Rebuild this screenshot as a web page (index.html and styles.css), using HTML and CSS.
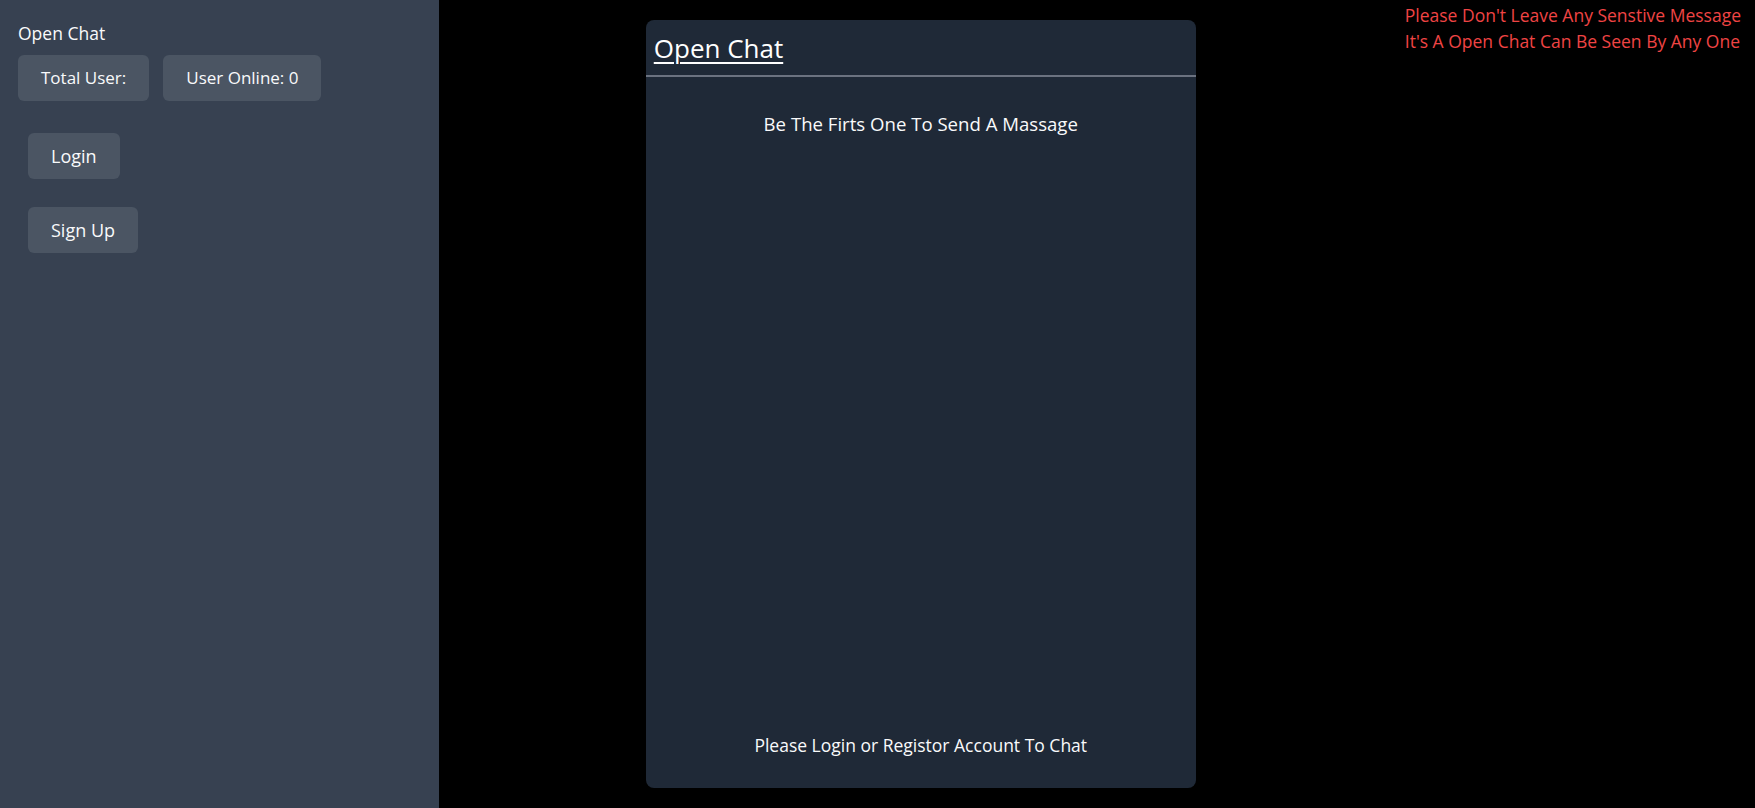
FILE: index.html
```html
<!DOCTYPE html>
<html lang="en">
<head>
<meta charset="utf-8">
<title>Open Chat</title>
<link rel="stylesheet" href="styles.css">
</head>
<body>
<div class="app">
  <aside class="sidebar">
    <div class="brand">Open Chat</div>
    <div class="stats">
      <div class="chip">Total User:</div>
      <div class="chip">User Online: 0</div>
    </div>
    <div class="auth">
      <button class="btn">Login</button>
      <button class="btn">Sign Up</button>
    </div>
  </aside>
  <main class="main">
    <section class="card">
      <header class="card-head"><a class="card-title" href="#">Open Chat</a></header>
      <div class="messages">
        <p class="empty">Be The Firts One To Send A Massage</p>
      </div>
      <footer class="card-foot">Please Login or Registor Account To Chat</footer>
    </section>
    <div class="notes">
      <p>Please Don't Leave Any Senstive Message</p>
      <p>It's A Open Chat Can Be Seen By Any One</p>
    </div>
  </main>
</div>
</body>
</html>
```

FILE: styles.css
```css
* { box-sizing: border-box; }
html, body { margin: 0; height: 100%; }
body {
  background: #000;
  color: #f9fafb;
  font-family: "Open Sans", "Noto Sans", sans-serif;
  font-size: 17px;
}
.app {
  display: flex;
  height: 808px;
}
.sidebar {
  width: 25%;
  flex: none;
  background: #374151;
  padding: 21px 0 0 18px;
  display: flex;
  flex-direction: column;
}
.brand {
  font-size: 17.5px;
  line-height: 24px;
}
.stats {
  display: flex;
  gap: 14px;
  margin-top: 10px;
}
.chip, .btn {
  background: #4b5563;
  color: #f9fafb;
  border-radius: 6px;
  height: 46px;
  display: flex;
  align-items: center;
  justify-content: center;
  padding: 0 23px;
  font-size: 17px;
  font-family: inherit;
  line-height: 24px;
}
.auth {
  display: flex;
  flex-direction: column;
  align-items: flex-start;
  gap: 28px;
  margin-top: 32px;
  padding-left: 10px;
}
.btn {
  border: 0;
  font-size: 18px;
  padding: 0 23px;
}
.main {
  flex: 1;
  display: flex;
  align-items: flex-start;
  padding: 20px 0 20px 207px;
  height: 100%;
}
.card {
  width: 550px;
  flex: none;
  height: 768px;
  background: #1f2937;
  border-radius: 8px;
  display: flex;
  flex-direction: column;
  box-shadow: 0 2px 4px rgba(0,0,0,0.4);
}
.card-head {
  padding: 11px 8px 10px;
  border-bottom: 2px solid #6b7280;
}
.card-title {
  color: #fff;
  font-size: 26px;
  line-height: 34px;
  text-decoration: underline;
  text-underline-offset: 4px;
  text-decoration-thickness: 2px;
}
.messages {
  flex: 1;
  padding-top: 35px;
}
.empty {
  margin: 0;
  text-align: center;
  font-size: 18.6px;
  line-height: 24px;
}
.card-foot {
  text-align: center;
  font-size: 17.5px;
  line-height: 24px;
  padding-bottom: 31px;
}
.notes {
  margin-left: 209px;
  margin-top: -18px;
  color: #ef4444;
  font-size: 17.5px;
  line-height: 26px;
}
.notes p { margin: 0; white-space: nowrap; }
```
